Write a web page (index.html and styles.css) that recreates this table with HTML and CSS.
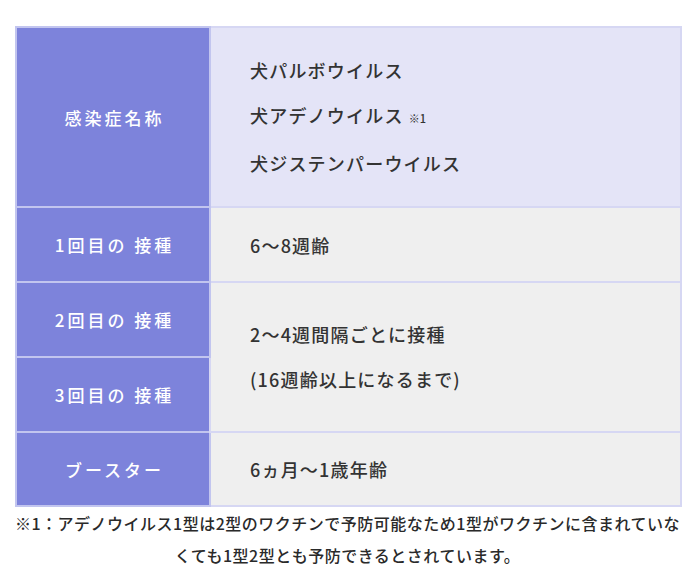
FILE: index.html
```html
<!DOCTYPE html>
<html lang="ja">
<head>
<meta charset="utf-8">
<link rel="stylesheet" href="styles.css">
</head>
<body>
<div class="wrap">
  <table class="vac">
    <tr class="r1">
      <th>感染症名称</th>
      <td class="lav">
        <p>犬パルボウイルス</p>
        <p>犬アデノウイルス <span class="note">※1</span></p>
        <p>犬ジステンパーウイルス</p>
      </td>
    </tr>
    <tr class="r">
      <th>1回目の 接種</th>
      <td>6〜8週齢</td>
    </tr>
    <tr class="r">
      <th>2回目の 接種</th>
      <td rowspan="2">
        <p>2〜4週間隔ごとに接種</p>
        <p>(16週齢以上になるまで)</p>
      </td>
    </tr>
    <tr class="r">
      <th>3回目の 接種</th>
    </tr>
    <tr class="r last">
      <th>ブースター</th>
      <td>6ヵ月〜1歳年齢</td>
    </tr>
  </table>
  <p class="foot">※1：アデノウイルス1型は2型のワクチンで予防可能なため1型がワクチンに含まれていなくても1型2型とも予防できるとされています。</p>
</div>
</body>
</html>
```

FILE: styles.css
```css
html, body {
  margin: 0;
  padding: 0;
  background: #ffffff;
}
body {
  font-family: "Noto Sans CJK JP", "Noto Sans", sans-serif;
}
.wrap {
  padding: 26px 18px 0 15px;
}
.vac {
  width: 667px;
  border-collapse: collapse;
  table-layout: fixed;
}
.vac th, .vac td {
  border: 2px solid #d6d7f3;
  padding: 0;
}
.vac th {
  width: 192px;
  background: #7d83db;
  color: #ffffff;
  font-size: 17px;
  font-weight: 500;
  letter-spacing: 3px;
  text-indent: 3px;
  text-align: center;
  vertical-align: middle;
  border-color: #c2c5ef;
}
.vac td {
  background: #efefef;
  color: #333333;
  font-size: 18px;
  font-weight: 500;
  padding-left: 39px;
  vertical-align: middle;
  letter-spacing: 1.2px;
}
.vac td.lav {
  background: #e4e4f7;
}
.vac td p {
  margin: 0;
  line-height: 45px;
}
.r1 { height: 180px; }
.r { height: 75px; }
.last { height: 74px; }
.note {
  font-size: 11px;
  letter-spacing: 0;
}
.foot {
  margin: 0;
  padding: 0 2px 0 0;
  text-align: center;
  font-size: 16px;
  font-weight: 500;
  line-height: 32px;
  color: #2a2a2a;
  letter-spacing: 0.5px;
}
```
